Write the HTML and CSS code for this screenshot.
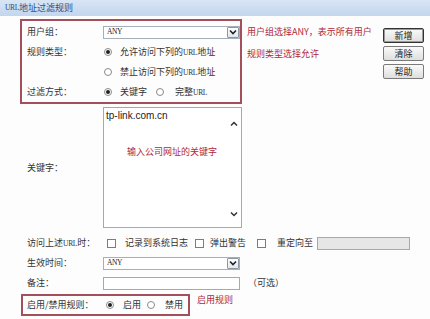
FILE: index.html
```html
<!DOCTYPE html>
<html lang="zh-CN">
<head>
    <meta charset="UTF-8">
    <title>URL地址过滤规则</title>
    <link rel="stylesheet" href="styles.css">
</head>
<body>
    <!-- Title -->
    <div class="titlebar">
        <span class="en">URL</span>地址过滤规则
    </div>

    <!-- Top section: rule group, notes, buttons -->
    <div class="top">
        <div class="group">
            <div class="row">
                <span class="label">用户组：</span>
                <div class="select wide">
                    <span class="sel-val">ANY</span>
                    <span class="sel-arrow">
                        <svg width="8" height="6" viewBox="0 0 8 6"><path d="M1 1.5 L4 4.5 L7 1.5" fill="none" stroke="#222" stroke-width="1.6"/></svg>
                    </span>
                </div>
            </div>
            <div class="row">
                <span class="label">规则类型：</span>
                <span class="radio on r1"></span>
                <span class="txt t1">允许访问下列的<span class="en">URL</span>地址</span>
            </div>
            <div class="row">
                <span class="label"></span>
                <span class="radio r1"></span>
                <span class="txt t1">禁止访问下列的<span class="en">URL</span>地址</span>
            </div>
            <div class="row">
                <span class="label">过滤方式：</span>
                <span class="radio on r1"></span>
                <span class="txt t1">关键字</span>
                <span class="radio r2"></span>
                <span class="txt t2">完整<span class="en">URL</span></span>
            </div>
        </div>

        <div class="notes">
            <div class="note">用户组选择ANY，表示所有用户</div>
            <div class="note">规则类型选择允许</div>
        </div>

        <div class="buttons">
            <button class="btn primary">新增</button>
            <button class="btn">清除</button>
            <button class="btn">帮助</button>
        </div>
    </div>

    <!-- Keyword -->
    <div class="row kw-row">
        <span class="label">关键字：</span>
        <div class="kwbox">
            <div class="kw-text">
                <div class="kw-line">tp-link.com.cn</div>
                <div class="note kw-note">输入公司网址的关键字</div>
            </div>
            <div class="kw-scroll">
                <svg width="8" height="6" viewBox="0 0 8 6"><path d="M1 4.5 L4 1.5 L7 4.5" fill="none" stroke="#333" stroke-width="1.5"/></svg>
                <svg width="8" height="6" viewBox="0 0 8 6"><path d="M1 1.5 L4 4.5 L7 1.5" fill="none" stroke="#333" stroke-width="1.5"/></svg>
            </div>
        </div>
    </div>

    <!-- Action -->
    <div class="row outer first">
        <span class="label">访问上述<span class="en">URL</span>时：</span>
        <span class="check c1"></span>
        <span class="txt c-t1">记录到系统日志</span>
        <span class="check c2"></span>
        <span class="txt c-t2">弹出警告</span>
        <span class="check c3"></span>
        <span class="txt c-t3">重定向至</span>
        <span class="input gray"></span>
    </div>

    <div class="row outer">
        <span class="label">生效时间：</span>
        <div class="select wide">
            <span class="sel-val">ANY</span>
            <span class="sel-arrow">
                <svg width="8" height="6" viewBox="0 0 8 6"><path d="M1 1.5 L4 4.5 L7 1.5" fill="none" stroke="#222" stroke-width="1.6"/></svg>
            </span>
        </div>
    </div>

    <div class="row outer">
        <span class="label">备注：</span>
        <span class="input wide"></span>
        <span class="txt optional">（可选）</span>
    </div>

    <!-- Enable / disable -->
    <div class="bottom">
        <div class="group small">
            <span class="label">启用/禁用规则：</span>
            <span class="radio on e1"></span>
            <span class="txt e-t1">启用</span>
            <span class="radio e2"></span>
            <span class="txt e-t2">禁用</span>
        </div>
        <div class="note enable-note">启用规则</div>
    </div>
</body>
</html>
```

FILE: styles.css
```css
body {
    margin: 0;
    background: #fdfdfd;
    font-family: "Noto Sans CJK SC", "Liberation Sans", sans-serif;
    font-size: 9px;
    line-height: 12px;
    color: #333;
}

.en {
    font-family: "Liberation Serif", serif;
    font-size: 7.5px;
    letter-spacing: -0.3px;
}

/* Title bar */
.titlebar {
    height: 16px;
    padding-left: 5px;
    display: flex;
    align-items: center;
    background: linear-gradient(to bottom, #d8e5f4, #c3d6ee);
    color: #2b4f86;
    font-size: 9px;
}

/* Top section */
.top {
    display: flex;
    align-items: flex-start;
    margin-top: 3px;
}

.group {
    margin-left: 20px;
    width: 222px;
    box-sizing: border-box;
    border: 2px solid #a4505c;
    padding: 1px 0 0 5px;
}

.row {
    display: flex;
    align-items: center;
    height: 20px;
}

.label {
    width: 76px;
    flex-shrink: 0;
    white-space: nowrap;
}

.outer,
.kw-row {
    padding-left: 27px;
}

/* Select */
.select {
    height: 13px;
    box-sizing: border-box;
    border: 1px solid #a6aeb8;
    background: #fff;
    display: flex;
    align-items: center;
    justify-content: space-between;
}

.select.wide {
    width: 137px;
}

.sel-val {
    font-family: "Liberation Serif", serif;
    font-size: 7.5px;
    letter-spacing: -0.4px;
    padding-left: 3px;
    color: #222;
}

.sel-arrow {
    width: 12px;
    height: 11px;
    box-sizing: border-box;
    border: 1px solid #8c97a6;
    border-radius: 1px;
    background: linear-gradient(to bottom, #fff, #e2e7ee);
    display: flex;
    align-items: center;
    justify-content: center;
}

/* Radios and checkboxes */
.radio {
    width: 8px;
    height: 8px;
    box-sizing: border-box;
    border: 1px solid #8a8a8a;
    border-radius: 50%;
    background: #fff;
    flex-shrink: 0;
    display: flex;
    align-items: center;
    justify-content: center;
}

.radio.on::after {
    content: "";
    width: 4px;
    height: 4px;
    border-radius: 50%;
    background: #222;
}

.check {
    width: 9px;
    height: 9px;
    box-sizing: border-box;
    border: 1px solid #7c7c7c;
    background: #fff;
    flex-shrink: 0;
}

.txt {
    white-space: nowrap;
}

.r1 { margin-left: 1px; }
.t1 { margin-left: 8px; }
.r2 { margin-left: 9px; }
.t2 { margin-left: 11px; }

.c1 { margin-left: 4px; }
.c-t1 { margin-left: 9px; }
.c2 { margin-left: 7px; }
.c-t2 { margin-left: 6px; }
.c3 { margin-left: 11px; }
.c-t3 { margin-left: 11px; }

/* Text inputs */
.input {
    height: 13px;
    box-sizing: border-box;
    border: 1px solid #a8a8a8;
    background: #fff;
}

.input.wide {
    width: 137px;
}

.input.gray {
    width: 93px;
    margin-left: 4px;
    background: #e6e6e6;
}

.optional {
    margin-left: 8px;
}

/* Notes in red */
.note {
    color: #b0283a;
    white-space: nowrap;
}

.notes {
    margin-left: 5px;
    padding-top: 3px;
}

.notes .note {
    height: 20px;
    line-height: 20px;
    margin-bottom: 2px;
}

/* Buttons */
.buttons {
    margin-left: auto;
    margin-right: 6px;
    padding-top: 9px;
    display: flex;
    flex-direction: column;
    gap: 3px;
}

.btn {
    width: 41px;
    height: 15px;
    padding: 0;
    font-family: "Noto Sans CJK SC", sans-serif;
    font-size: 9px;
    line-height: 12px;
    color: #222;
    border: 1px solid #7a7a7a;
    border-radius: 2px;
    background: linear-gradient(to bottom, #fafafa, #dedede);
}

.btn.primary {
    border-color: #333;
    box-shadow: inset 0 0 0 1px #9a9a9a;
}

/* Keyword box */
.kw-row {
    height: 121px;
    margin-top: 3px;
}

.kwbox {
    width: 139px;
    height: 121px;
    box-sizing: border-box;
    border: 1px solid #a8a8a8;
    background: #fff;
    display: flex;
}

.kw-text {
    flex: 1;
    padding: 2px 0 0 2px;
}

.kw-line {
    font-family: "Liberation Sans", sans-serif;
    font-size: 10px;
    color: #222;
}

.kw-note {
    margin: 24px 0 0 21px;
}

.kw-scroll {
    width: 14px;
    display: flex;
    flex-direction: column;
    align-items: center;
    justify-content: space-between;
    padding: 13px 0 10px;
}

/* Bottom section */
.first {
    margin-top: 5px;
}

.bottom {
    display: flex;
    align-items: center;
    margin-top: 1px;
}

.group.small {
    margin-left: 21px;
    width: 169px;
    height: 22px;
    padding: 0 0 0 4px;
    display: flex;
    align-items: center;
}

.e1 { margin-left: 3px; }
.e-t1 { margin-left: 9px; }
.e2 { margin-left: 6px; }
.e-t2 { margin-left: 10px; }

.enable-note {
    margin-left: 7px;
    margin-top: -10px;
}
```
